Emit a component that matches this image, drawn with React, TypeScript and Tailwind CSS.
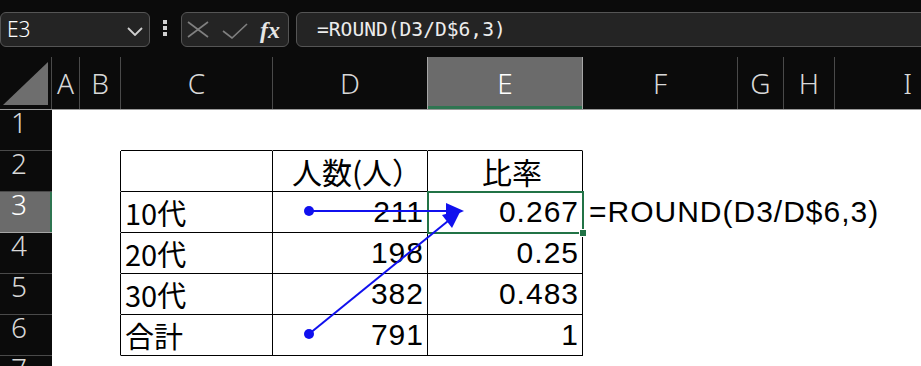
import React from "react"

interface Col {
    label: string
    width: string
}

const cols: Col[] = [
    { label: "A", width: "w-[28px]" },
    { label: "B", width: "w-[41px]" },
    { label: "C", width: "w-[152px]" },
    { label: "D", width: "w-[155px]" },
    { label: "E", width: "w-[155px]" },
    { label: "F", width: "w-[155px]" },
    { label: "G", width: "w-[46px]" },
    { label: "H", width: "w-[51px]" },
    { label: "I", width: "w-[146px]" },
]

// rows 2..6 of the little table (C, D, E)
const table: Record<number, [string, string, string]> = {
    2: ["", "人数(人）", "比率"],
    3: ["10代", "211", "0.267"],
    4: ["20代", "198", "0.25"],
    5: ["30代", "382", "0.483"],
    6: ["合計", "791", "1"],
}

const cjk = "font-['Noto_Sans_CJK_JP',sans-serif]"
const num = "font-['Liberation_Sans',Arial,sans-serif] tracking-[1px]"

function Cell({ row, col }: { row: number; col: number }) {
    const inTable = row >= 2 && row <= 6
    const bottom = row >= 1 && row <= 6 && col >= 2 && col <= 4
    const right = inTable && col >= 1 && col <= 4
    const data = table[row]
    const cls = [
        cols[col].width,
        "shrink-0 h-full border-r border-b flex items-end relative",
        right ? "border-r-black" : "border-r-transparent",
        bottom ? "border-b-black" : "border-b-transparent",
    ].join(" ")

    let content: React.ReactNode = null
    if (data && col === 2) {
        content = <span className={`${cjk} text-[29px] leading-[30px] pl-[4px] pb-[5px] text-black`}>{data[0]}</span>
    }
    if (data && (col === 3 || col === 4)) {
        const v = data[col - 2]
        if (row === 2) {
            content = <span className={`${cjk} text-[30px] leading-[30px] w-full text-center pl-[14px] pb-[5px] text-black`}>{v}</span>
        } else {
            content = <span className={`${num} text-[30px] leading-[30px] w-full text-right pr-[3px] pb-[5px] text-black`}>{v}</span>
        }
    }
    if (row === 3 && col === 5) {
        content = <span className={`${num} text-[30px] leading-[30px] pl-[6px] pb-[5px] text-black whitespace-nowrap`}>=ROUND(D3/D$6,3)</span>
    }

    return (
        <div className={cls}>
            {content}
            {row === 3 && col === 4 && (
                <div className="absolute -left-[1px] -top-[1px] -right-[2px] -bottom-[2px] border-2 border-[#217346] z-10">
                    <div className="absolute -right-[4px] -bottom-[4px] w-[6px] h-[6px] bg-[#217346] outline outline-1 outline-white" />
                </div>
            )}
        </div>
    )
}

export default function App() {
    const rows = [1, 2, 3, 4, 5, 6, 7]

    return (
        <div className="relative w-[921px] h-[366px] overflow-hidden bg-[#0b0b0b]">
            {/* toolbar */}
            <div className="flex items-start h-[57px] pt-[12px]">
                <div className="w-[150px] h-[35px] shrink-0 rounded-[6px] border border-[#555] bg-[#242424] flex items-center justify-between pl-[6px] pr-[6px]">
                    <span className="font-['Noto_Sans',sans-serif] font-light text-[21px] leading-[21px] text-white">E3</span>
                    <svg width="16" height="9" viewBox="0 0 16 9" className="mt-[3px]">
                        <polyline points="1,1 8,8 15,1" fill="none" stroke="#cfcfcf" strokeWidth="1.8" />
                    </svg>
                </div>
                <div className="ml-[13px] mt-[8px] flex flex-col gap-[2px]">
                    <div className="w-[4px] h-[4px] bg-[#d0d0d0]" />
                    <div className="w-[4px] h-[4px] bg-[#d0d0d0]" />
                    <div className="w-[4px] h-[4px] bg-[#d0d0d0]" />
                </div>
                <div className="ml-[14px] w-[108px] h-[35px] shrink-0 rounded-[6px] border border-[#555] bg-[#242424] flex items-center">
                    <svg width="22" height="17" viewBox="0 0 22 17" className="ml-[5px]">
                        <line x1="1" y1="1" x2="21" y2="16" stroke="#808080" strokeWidth="1.6" />
                        <line x1="21" y1="1" x2="1" y2="16" stroke="#808080" strokeWidth="1.6" />
                    </svg>
                    <svg width="26" height="16" viewBox="0 0 26 16" className="ml-[13px] mt-[2px]">
                        <polyline points="1,8 10,15 25,1" fill="none" stroke="#808080" strokeWidth="1.6" />
                    </svg>
                    <span className="ml-[12px] font-['Liberation_Serif',serif] italic font-bold text-[24px] leading-[24px] text-[#e6e6e6]">fx</span>
                </div>
                <div className="ml-[7px] w-[700px] h-[35px] shrink-0 rounded-[6px] border border-[#555] bg-[#242424] flex items-center pl-[20px]">
                    <span className="font-['DejaVu_Sans_Mono',monospace] text-[19.6px] leading-[20px] text-[#ececec]">=ROUND(D3/D$6,3)</span>
                </div>
            </div>

            {/* column headers */}
            <div className="flex h-[53px] border-b border-[#9a9a9a]">
                <div className="w-[52px] shrink-0 border-r border-[#4a4a4a] relative">
                    <svg width="52" height="52" viewBox="0 0 52 52" className="absolute left-0 top-0">
                        <polygon points="3,48 48,5 48,48" fill="#6e6e6e" />
                    </svg>
                </div>
                {cols.map((c) => (
                    <div
                        key={c.label}
                        className={`${c.width} shrink-0 border-r flex items-center justify-center font-['Noto_Sans',sans-serif] font-light text-[28px] leading-[28px] ${
                            c.label === "E"
                                ? "bg-[#6b6b6b] text-white border-[#a6a6a6] shadow-[inset_0_-3px_0_#2f7551]"
                                : c.label === "D"
                                ? "border-[#a6a6a6] text-[#d8d8d8]"
                                : "border-[#4a4a4a] text-[#d8d8d8]"
                        }`}
                    >
                        {c.label}
                    </div>
                ))}
            </div>

            {/* grid */}
            <div className="bg-white">
                {rows.map((r) => (
                    <div key={r} className="flex h-[41px]">
                        <div
                            className={`w-[52px] shrink-0 h-full border-b pl-[11px] font-['Noto_Sans',sans-serif] font-light text-[28px] leading-[24px] ${
                                r === 3
                                    ? "bg-[#6b6b6b] text-white border-[#a6a6a6] shadow-[inset_-2px_0_0_#2f7551]"
                                    : "bg-[#0b0b0b] text-[#d8d8d8] border-[#4a4a4a]"
                            }`}
                        >
                            {r}
                        </div>
                        {cols.map((c, i) => (
                            <Cell key={c.label} row={r} col={i} />
                        ))}
                    </div>
                ))}
            </div>

            {/* arrows (drawn over the sheet) */}
            <svg className="absolute left-0 top-0 pointer-events-none z-20" width="921" height="366" viewBox="0 0 921 366">
                <line x1="309" y1="211" x2="447" y2="211" stroke="#1010ee" strokeWidth="2" />
                <polygon points="464,211 446,203 446,219" fill="#1010ee" />
                <circle cx="309" cy="211" r="5" fill="#1010ee" />
                <line x1="309" y1="334" x2="448" y2="221" stroke="#1010ee" strokeWidth="2" />
                <polygon points="461,210 452,228 442,215" fill="#1010ee" />
                <circle cx="309" cy="334" r="5" fill="#1010ee" />
            </svg>
        </div>
    )
}
